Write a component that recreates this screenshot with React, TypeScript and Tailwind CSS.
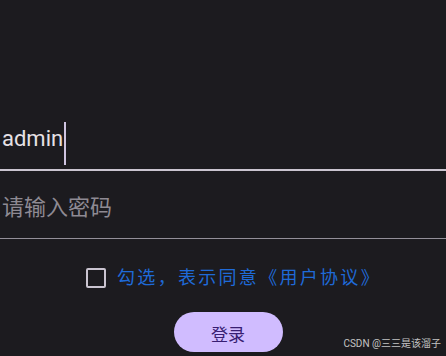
import { useState } from "react";

const cjk = { fontFamily: 'Roboto, "Noto Sans CJK SC", sans-serif' };

export default function App() {
  const [agreed, setAgreed] = useState(false);

  return (
    <div
      className="relative h-[356px] w-[446px] overflow-hidden bg-[#1c1b1f]"
      style={cjk}
    >
      <div className="flex flex-col pt-[115px]">
        {/* username field, focused */}
        <div className="flex h-[56px] items-center border-b-2 border-[#cac4d0] pb-[6px] pl-[2px]">
          <span className="text-[22px] leading-none text-[#e6e1e5]">admin</span>
          <span className="ml-[1px] mt-[9px] h-[43px] w-[2px] bg-[#cfc4e0]" />
        </div>

        {/* password field */}
        <div className="mt-[12px] flex h-[56px] items-center border-b border-[#938f99] pb-[6px] pl-[2px]">
          <span className="text-[22px] leading-none text-[#8e8a93]">请输入密码</span>
        </div>

        {/* agreement */}
        <div className="mt-[19px] flex h-[40px] items-center justify-center pl-[21px]">
          <button
            onClick={() => setAgreed(!agreed)}
            className="flex h-[20px] w-[20px] items-center justify-center rounded-[2px] border-2 border-[#cac4d0]"
          >
            {agreed && <span className="h-[10px] w-[10px] bg-[#cac4d0]" />}
          </button>
          <span className="ml-[11px] text-[18px] leading-none tracking-[2.3px] text-[#1f6ad8]">
            勾选，表示同意《用户协议》
          </span>
        </div>

        {/* login button */}
        <div className="mt-[14px] flex justify-center pl-[10px]">
          <button className="h-[40px] w-[109px] rounded-full bg-[#d0bcff] pt-[8px] text-[17px] text-[#381e72]">
            登录
          </button>
        </div>
      </div>

      <span className="absolute right-[5px] top-[336px] text-[10px] text-[#c4c4c4]">
        CSDN @三三是该溜子
      </span>
    </div>
  );
}
